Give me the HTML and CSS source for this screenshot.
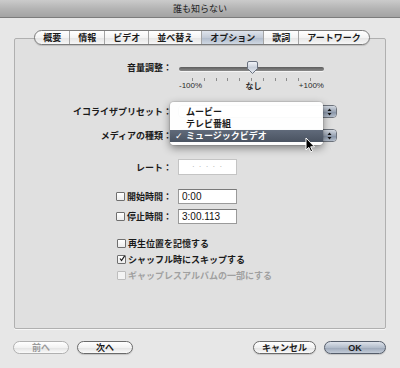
FILE: index.html
```html
<!DOCTYPE html>
<html lang="ja">
<head>
<meta charset="utf-8">
<title>誰も知らない</title>
<link rel="stylesheet" href="styles.css">
</head>
<body>
<div class="window">
  <div class="titlebar">誰も知らない</div>
  <div class="main">
    <div class="group">
      <div class="tabs">
        <span class="tab">概要</span>
        <span class="tab">情報</span>
        <span class="tab">ビデオ</span>
        <span class="tab">並べ替え</span>
        <span class="tab tab-on">オプション</span>
        <span class="tab">歌詞</span>
        <span class="tab">アートワーク</span>
      </div>
      <div class="form">
        <div class="row row-volume">
          <span class="lbl">音量調整：</span>
          <div class="slider">
            <div class="track"></div>
            <svg class="thumb" width="11" height="13" viewBox="0 0 11 13"><defs><linearGradient id="tg" x1="0" y1="0" x2="0" y2="1"><stop offset="0" stop-color="#f4f6fa"/><stop offset="0.5" stop-color="#c9d0db"/><stop offset="1" stop-color="#e6eaf0"/></linearGradient></defs><path d="M2 0.5 H9 Q10.5 0.5 10.5 2 V7.5 L5.5 12.5 L0.5 7.5 V2 Q0.5 0.5 2 0.5 Z" fill="url(#tg)" stroke="#6a7280"/></svg>
          </div>
        </div>
        <div class="scale">
          <div class="ticks">
            <i></i><i></i><i></i><i></i><i></i><i></i><i></i><i></i><i></i><i></i><i></i>
          </div>
          <div class="scale-labels"><span>-100%</span><span class="cjk">なし</span><span>+100%</span></div>
        </div>
        <div class="row row-eq">
          <span class="lbl">イコライザプリセット：</span>
          <div class="popup"><span class="popup-body"></span><span class="popup-arrows"><svg width="5" height="8" viewBox="0 0 5 8"><path d="M2.5 0.5 L4.5 3 H0.5 Z M2.5 7.5 L4.5 5 H0.5 Z" fill="#111"/></svg></span></div>
        </div>
        <div class="row row-media">
          <span class="lbl">メディアの種類：</span>
          <div class="popup"><span class="popup-body"></span><span class="popup-arrows"><svg width="5" height="8" viewBox="0 0 5 8"><path d="M2.5 0.5 L4.5 3 H0.5 Z M2.5 7.5 L4.5 5 H0.5 Z" fill="#111"/></svg></span></div>
        </div>
        <div class="row row-rate">
          <span class="lbl">レート：</span>
          <div class="field field-rate">· · · · ·</div>
        </div>
        <div class="row row-start">
          <span class="lbl"><span class="cb"></span>開始時間：</span>
          <div class="field">0:00</div>
        </div>
        <div class="row row-stop">
          <span class="lbl"><span class="cb"></span>停止時間：</span>
          <div class="field">3:00.113</div>
        </div>
        <div class="checks">
          <div class="check"><span class="cb"></span>再生位置を記憶する</div>
          <div class="check"><span class="cb cb-on"><svg width="9" height="9" viewBox="0 0 9 9"><path d="M1.5 4.5 L3.8 7.5 L8.5 0.5" fill="none" stroke="#1c1c1c" stroke-width="1.8"/></svg></span>シャッフル時にスキップする</div>
          <div class="check check-off"><span class="cb"></span>ギャップレスアルバムの一部にする</div>
        </div>
      </div>
      <div class="menu">
        <div class="item">ムービー</div>
        <div class="item">テレビ番組</div>
        <div class="item item-on"><span class="mark">✓</span>ミュージックビデオ</div>
      </div>
      <svg class="cursor" width="11" height="16" viewBox="0 0 11 16"><path d="M1 1 V13 L3.8 10.4 L5.8 14.8 L7.6 14 L5.7 9.8 L9.5 9.8 Z" fill="#000" stroke="#fff" stroke-width="1"/></svg>
    </div>
    <div class="buttons">
      <div class="btn-group">
        <span class="btn btn-off">前へ</span>
        <span class="btn">次へ</span>
      </div>
      <div class="btn-group">
        <span class="btn btn-cancel">キャンセル</span>
        <span class="btn btn-ok">OK</span>
      </div>
    </div>
  </div>
</div>
</body>
</html>
```

FILE: styles.css
```css
* { box-sizing: border-box; }
html, body {
  margin: 0;
  padding: 0;
  width: 400px;
  height: 368px;
  overflow: hidden;
  background: #e7e7e7;
  font-family: "Noto Sans CJK JP", "Noto Sans", sans-serif;
  font-size: 9px;
  color: #1a1a1a;
}
.window {
  width: 400px;
  height: 368px;
  display: flex;
  flex-direction: column;
}
.titlebar {
  height: 18px;
  line-height: 17px;
  text-align: center;
  background: linear-gradient(#cbcbcb, #b4b4b4 50%, #a3a3a3);
  border-bottom: 1px solid #7c7c7c;
  color: #202020;
  font-size: 9px;
}
.main {
  flex: 1;
  display: flex;
  flex-direction: column;
}
.group {
  position: relative;
  margin: 20px 14px 0 14px;
  height: 291px;
  border: 1px solid #b0b0b0;
  border-radius: 2px;
  background: #e0e0e0;
  box-shadow: 0 1px 0 #f7f7f7;
}
.tabs {
  display: flex;
  width: max-content;
  margin: -9px auto 0 auto;
  position: relative;
  left: 2px;
  height: 15px;
  border: 1px solid #7b7b7b;
  border-radius: 8px;
  overflow: hidden;
  background: linear-gradient(#ffffff, #f4f4f4 50%, #e6e6e6 55%, #f6f6f6);
  box-shadow: 0 1px 1px rgba(0,0,0,0.15);
}
.tab {
  padding: 0 8px;
  line-height: 13px;
  font-weight: bold;
  border-left: 1px solid #a4a4a4;
  color: #1a1a1a;
}
.tab:first-child { border-left: none; padding-left: 8px; }
.tab-on {
  background: linear-gradient(#dfe4ec, #c3cbd7 50%, #b2bdcc 55%, #cfd7e2);
}
.form {
  display: flex;
  flex-direction: column;
  padding-top: 16px;
}
.row {
  display: flex;
  align-items: center;
}
.lbl {
  width: 157px;
  display: flex;
  justify-content: flex-end;
  align-items: center;
  font-weight: bold;
  white-space: nowrap;
  margin-right: 6px;
}
.row-volume { height: 14px; line-height: 14px; }
.slider {
  position: relative;
  width: 145px;
  height: 14px;
  margin-left: 1px;
  display: flex;
  align-items: center;
}
.track {
  width: 100%;
  height: 4px;
  margin-top: 1px;
  border-radius: 2px;
  background: linear-gradient(#5d5d5d, #8a8a8a);
  box-shadow: 0 1px 0 #f5f5f5;
}
.thumb {
  position: absolute;
  left: 68px;
  top: 0;
}
.scale {
  margin-left: 164px;
  width: 145px;
}
.ticks {
  display: flex;
  justify-content: space-between;
  padding: 0 13px;
  margin-top: 3px;
  height: 3px;
}
.ticks i {
  display: block;
  width: 1px;
  height: 3px;
  background: #8c8c8c;
}
.scale-labels {
  display: flex;
  justify-content: space-between;
  height: 10px;
  line-height: 10px;
  font-family: "Liberation Sans", sans-serif;
  font-size: 8px;
  color: #2a2a2a;
}
.scale-labels .cjk {
  font-family: "Noto Sans CJK JP", sans-serif;
  font-size: 8px;
  font-weight: bold;
  margin-left: 6px;
}
.row-eq { margin-top: 14px; height: 13px; }
.row-media { margin-top: 11px; height: 13px; }
.popup {
  width: 159px;
  height: 13px;
  display: flex;
  border: 1px solid #6d737c;
  border-radius: 4px;
  background: #fff;
  overflow: hidden;
}
.popup-body { flex: 1; }
.popup-arrows {
  width: 14px;
  display: flex;
  align-items: center;
  justify-content: center;
  background: linear-gradient(#d2d8e1, #9ba6b6 50%, #8794a7 55%, #b3bdcb);
  border-left: 1px solid #6b7482;
}
.row-rate { margin-top: 17px; height: 16px; }
.row-start { margin-top: 14px; height: 15px; }
.row-stop { margin-top: 5px; height: 15px; }
.field {
  width: 59px;
  height: 100%;
  border: 1px solid #9a9a9a;
  border-top-color: #7a7a7a;
  background: #fff;
  font-family: "Liberation Sans", sans-serif;
  font-size: 10px;
  line-height: 13px;
  padding-left: 3px;
  color: #111;
}
.field-rate {
  border-color: #c4c4c4;
  color: #a8a8a8;
  text-align: center;
  padding-left: 0;
  line-height: 14px;
  font-size: 8px;
  letter-spacing: 1px;
}
.cb {
  display: inline-flex;
  align-items: center;
  justify-content: center;
  width: 9px;
  height: 9px;
  margin-right: 2px;
  border: 1px solid #6f6f6f;
  border-radius: 1px;
  background: linear-gradient(#ffffff, #ececec);
  flex: none;
  overflow: visible;
}
.cb svg { margin-top: -2px; margin-left: 1px; }
.checks {
  margin-top: 11px;
  padding-left: 102px;
  display: flex;
  flex-direction: column;
}
.check {
  display: flex;
  align-items: center;
  height: 16px;
  font-weight: bold;
}
.check-off { color: #a0a0a0; }
.check-off .cb { border-color: #bdbdbd; background: #f3f3f3; }
.menu {
  position: absolute;
  left: 155px;
  top: 63px;
  width: 153px;
  height: 43px;
  padding-top: 4px;
  background: rgba(255,255,255,0.97);
  border-radius: 4px;
  box-shadow: 0 3px 8px rgba(0,0,0,0.45), 0 0 0 1px rgba(0,0,0,0.08);
}
.item {
  height: 12px;
  line-height: 12px;
  padding-left: 16px;
  font-weight: bold;
  position: relative;
  color: #1a1a1a;
}
.item-on {
  background: linear-gradient(#606a7a, #4a5361);
  color: #fff;
}
.mark {
  position: absolute;
  left: 5px;
  top: 0;
  font-family: "DejaVu Sans", sans-serif;
  font-size: 9px;
  font-weight: bold;
}
.cursor {
  position: absolute;
  left: 290px;
  top: 98px;
}
.buttons {
  display: flex;
  justify-content: space-between;
  margin-top: 12px;
  padding: 0 14px 0 13px;
}
.btn-group { display: flex; gap: 8px; }
.btn {
  display: flex;
  align-items: center;
  justify-content: center;
  width: 56px;
  height: 13px;
  border: 1px solid #6a6a6a;
  border-radius: 7px;
  background: linear-gradient(#ffffff, #f2f2f2 50%, #e4e4e4 55%, #fafafa);
  font-weight: bold;
  font-size: 9px;
  color: #1a1a1a;
  box-shadow: 0 1px 1px rgba(0,0,0,0.15);
}
.btn-off {
  border-color: #b0b0b0;
  color: #9a9a9a;
  box-shadow: none;
}
.btn-cancel { width: 63px; }
.btn-ok {
  width: 62px;
  border-color: #555d6a;
  background: linear-gradient(#dde2ea, #b3bdcb 50%, #9ea9ba 55%, #c3ccd8);
  font-family: "Liberation Sans", sans-serif;
}
```
